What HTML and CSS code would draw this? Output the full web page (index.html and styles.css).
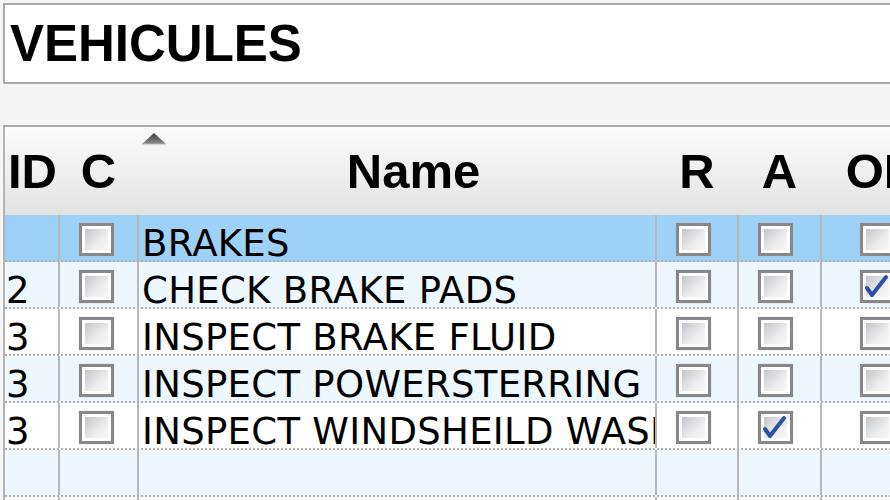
FILE: index.html
```html
<!DOCTYPE html>
<html lang="fr">
<head>
  <meta charset="UTF-8" />
  <title>Vehicules</title>
  <link rel="stylesheet" href="styles.css">
</head>
<body>
  <!-- Title field -->
  <div class="title-box">VEHICULES</div>

  <!-- Task table -->
  <div class="grid">
    <div class="grid-head">
      <div class="hcell hcell-id">ID</div>
      <div class="hcell">C</div>
      <div class="hcell hcell-name">
        <svg class="sort-arrow" width="26" height="14" viewBox="0 0 26 14">
          <defs>
            <linearGradient id="arrowFill" x1="0" y1="0" x2="0" y2="1">
              <stop offset="0" stop-color="#3c3c3c" />
              <stop offset="1" stop-color="#8c8c8c" />
            </linearGradient>
          </defs>
          <polygon points="1,12 13,1 25,12" fill="url(#arrowFill)" />
          <line x1="1" y1="12.5" x2="25" y2="12.5" stroke="#d8d8d8" stroke-width="1.5" />
        </svg>
        Name
      </div>
      <div class="hcell">R</div>
      <div class="hcell">A</div>
      <div class="hcell">OK</div>
    </div>

    <div class="row row-selected">
      <div class="cell cell-id"></div>
      <div class="cell cell-check"><span class="box"></span></div>
      <div class="cell cell-name">BRAKES</div>
      <div class="cell cell-check"><span class="box"></span></div>
      <div class="cell cell-check"><span class="box"></span></div>
      <div class="cell cell-check cell-last"><span class="box"></span></div>
    </div>

    <div class="row row-alt">
      <div class="cell cell-id">2</div>
      <div class="cell cell-check"><span class="box"></span></div>
      <div class="cell cell-name">CHECK BRAKE PADS</div>
      <div class="cell cell-check"><span class="box"></span></div>
      <div class="cell cell-check"><span class="box"></span></div>
      <div class="cell cell-check cell-last">
        <span class="box"><svg class="tick" viewBox="0 0 29 27"><path d="M4 15 L9 22 L23 4" /></svg></span>
      </div>
    </div>

    <div class="row">
      <div class="cell cell-id">3</div>
      <div class="cell cell-check"><span class="box"></span></div>
      <div class="cell cell-name">INSPECT BRAKE FLUID</div>
      <div class="cell cell-check"><span class="box"></span></div>
      <div class="cell cell-check"><span class="box"></span></div>
      <div class="cell cell-check cell-last"><span class="box"></span></div>
    </div>

    <div class="row row-alt">
      <div class="cell cell-id">3</div>
      <div class="cell cell-check"><span class="box"></span></div>
      <div class="cell cell-name">INSPECT POWERSTERRING</div>
      <div class="cell cell-check"><span class="box"></span></div>
      <div class="cell cell-check"><span class="box"></span></div>
      <div class="cell cell-check cell-last"><span class="box"></span></div>
    </div>

    <div class="row">
      <div class="cell cell-id">3</div>
      <div class="cell cell-check"><span class="box"></span></div>
      <div class="cell cell-name">INSPECT WINDSHEILD WASHER FLUID</div>
      <div class="cell cell-check"><span class="box"></span></div>
      <div class="cell cell-check">
        <span class="box"><svg class="tick" viewBox="0 0 29 27"><path d="M4 15 L9 22 L23 4" /></svg></span>
      </div>
      <div class="cell cell-check cell-last"><span class="box"></span></div>
    </div>

    <div class="row row-alt">
      <div class="cell cell-id"></div>
      <div class="cell"></div>
      <div class="cell cell-name"></div>
      <div class="cell"></div>
      <div class="cell"></div>
      <div class="cell"></div>
    </div>

    <div class="row">
      <div class="cell cell-id"></div>
      <div class="cell"></div>
      <div class="cell cell-name"></div>
      <div class="cell"></div>
      <div class="cell"></div>
      <div class="cell"></div>
    </div>
  </div>
</body>
</html>
```

FILE: styles.css
```css
/* base */
html, body {
  margin: 0;
  padding: 0;
  width: 890px;
  height: 500px;
  overflow: hidden;
  background: #f5f5f5;
  color: #000;
  font-family: "DejaVu Sans", Verdana, sans-serif;
}
*, *::before, *::after {
  box-sizing: border-box;
}

/* title field */
.title-box {
  margin: 3px 0 0 3px;
  height: 81px;
  border: 2px solid #a9a9b0;
  border-right: none;
  background: #fff;
  padding-left: 5px;
  font-family: "Liberation Sans", Arial, sans-serif;
  font-weight: bold;
  font-size: 51px;
  line-height: 77px;
}

/* table */
.grid {
  margin: 41px 0 0 3px;
  border-top: 2px solid #a9a9b0;
  border-left: 2px solid #b4b4b4;
  width: 940px;
}

.grid-head,
.row {
  display: grid;
  grid-template-columns: 55px 79px 518px 82px 83px 123px;
}

.grid-head {
  height: 88px;
  background: linear-gradient(#fbfbfb, #f1f1f1 45%, #e2e2e2);
}
.hcell {
  position: relative;
  border-right: 2px solid transparent;
  text-align: center;
  font-family: "Liberation Sans", Arial, sans-serif;
  font-weight: bold;
  font-size: 49px;
  line-height: 88px;
}
.hcell-id {
  text-align: left;
  padding-left: 3px;
}
.hcell-name {
  padding-left: 33px;
}
.sort-arrow {
  position: absolute;
  left: 2px;
  top: 5px;
}

/* rows */
.row {
  height: 47px;
  border-bottom: 2px dotted #b0b0b0;
  background: #fff;
}
.row-alt {
  background: #eef6fe;
}
.row-selected {
  background: #9ed1f8;
}

.cell {
  height: 45px;
  overflow: hidden;
  white-space: nowrap;
  border-right: 2px solid #b8b8b8;
  font-size: 37px;
  letter-spacing: 0.3px;
  padding-top: 12px;
  line-height: 33px;
}
.cell-id {
  padding-left: 1px;
}
.cell-name {
  padding-left: 3px;
}
.cell-check {
  padding: 8px 0 0 19px;
}
.cell-last {
  padding-left: 38px;
  border-right: none;
}

/* checkbox */
.box {
  display: block;
  position: relative;
  width: 35px;
  height: 33px;
  border: 3px solid #888;
  box-shadow: inset 0 0 0 3px #fdfdfd, 0 0 1px #bbb;
  background: linear-gradient(135deg, #c4c5ca 10%, #eeeeef 60%, #fbfbfb);
}
.tick {
  position: absolute;
  left: 0;
  top: 0;
  width: 29px;
  height: 27px;
}
.tick path {
  fill: none;
  stroke: #2d4fa8;
  stroke-width: 4;
  stroke-linecap: round;
  stroke-linejoin: round;
}
```
